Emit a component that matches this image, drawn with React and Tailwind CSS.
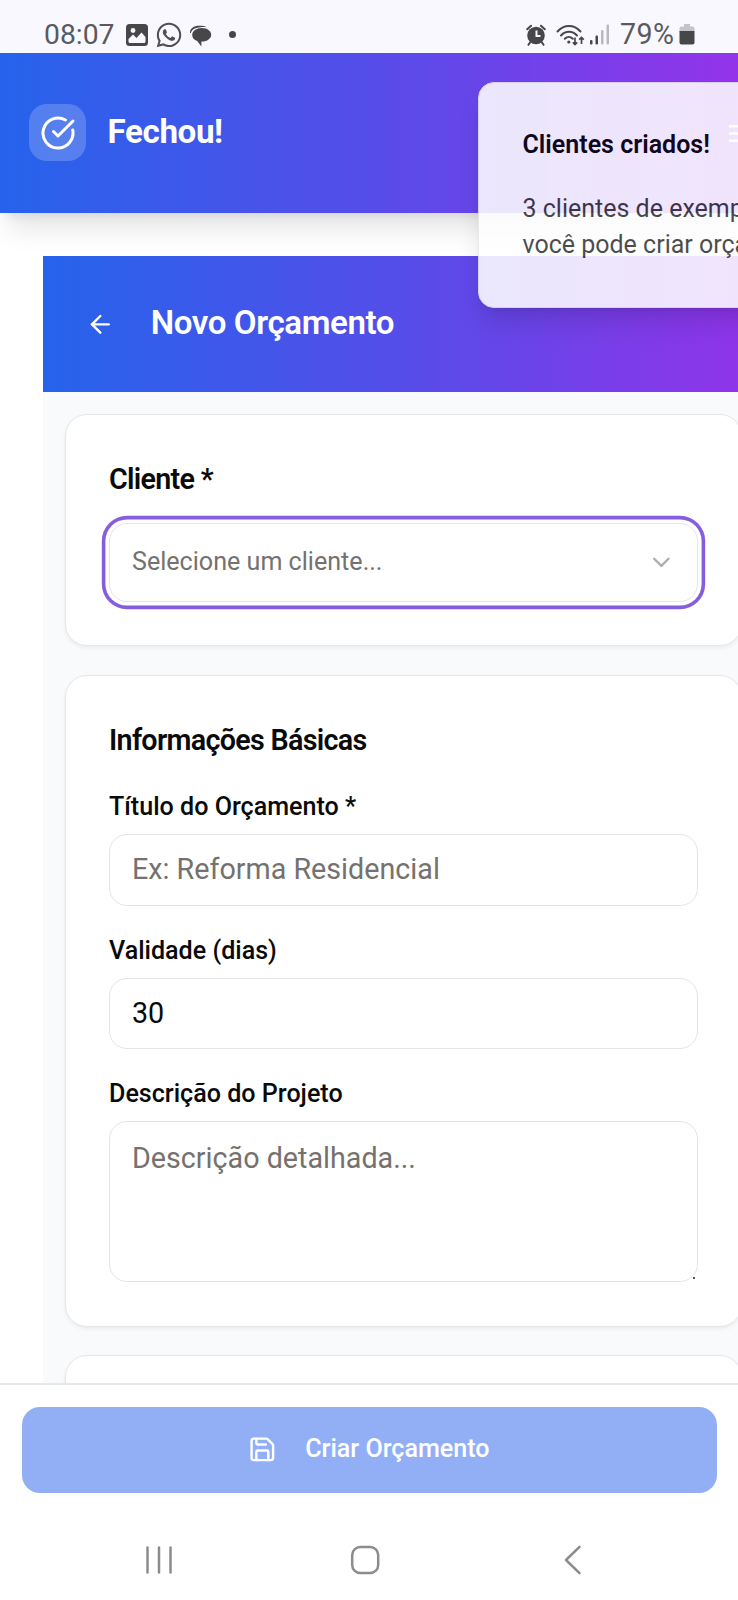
import { ArrowLeft, ChevronDown, CircleCheckBig, Save } from "lucide-react";
import { FaWhatsapp } from "react-icons/fa";

function StatusBar() {
  return (
    <div className="flex h-[53px] shrink-0 items-start justify-between bg-[#f9f8ff] pl-[44px] pr-[43px] pt-[19px] text-[#505054]">
      <div className="flex h-[31px] items-center">
        <span className="w-[82px] text-[28.3px] leading-[31px] text-[#5a5a5e]">08:07</span>
        <svg width="22" height="22" viewBox="0 0 22 22" className="shrink-0">
          <rect width="22" height="22" rx="3.5" fill="#47474a" />
          <path d="M2.5 17.5v-2.500l4.500-4.500 3.500 3.500 5-5.500 4 4.500v4.500a1.5 1.5 0 0 1-1.5 1.5H4a1.5 1.5 0 0 1-1.5-1.5Z" fill="#f9f8ff" />
          <circle cx="7" cy="6.5" r="2.4" fill="#f9f8ff" />
        </svg>
        <FaWhatsapp className="ml-[7px] h-[28px] w-[28px] shrink-0" />
        <svg width="24" height="22" viewBox="0 0 24 22" className="ml-[6px] mt-[2px] shrink-0" fill="#47474a">
          <path d="M1 8C.6 3.500 5 .8 10 .8c3.500 0 6.600.4 8.500 1.700-2-.4-4.500-.5-6.500-.3C6.500 2.300 3 4.300 1.800 8Z" />
          <path d="M12.800 3c5.300 0 9.400 2.800 9.400 6.800 0 3.900-4 6.800-9.200 6.800h-.6V21.500L8.200 16C5 15 3.200 12.600 3.200 9.900 3.200 6 7.400 3 12.800 3Z" />
        </svg>
        <span className="ml-[16px] h-[7px] w-[7px] rounded-full bg-[#47474a]" />
      </div>
      <div className="flex h-[31px] items-center">
        <svg width="20" height="22" viewBox="0 0 20 22" className="shrink-0" fill="none">
          <circle cx="10" cy="11.500" r="8.800" fill="#47474a" />
          <path d="M1.200 5.200 5 1.700M18.800 5.200 15 1.700M4 18.500 2.500 20.800M16 18.500l1.500 2.300" stroke="#47474a" strokeWidth="2" strokeLinecap="round" />
          <path d="M10.500 6.500v5.500h4" stroke="#f9f8ff" strokeWidth="2" />
        </svg>
        <svg width="29" height="22" viewBox="0 0 29 22" className="ml-[10px] shrink-0" fill="none" stroke="#47474a">
          <path d="M1.500 7.500C8 .2 18 .2 24.500 7.500M5 11.500c4.500-5 11.500-5 16 0M8.800 14.800c2.500-2.500 5.500-2.500 8 0" strokeWidth="2" strokeLinecap="round" />
          <circle cx="12.800" cy="18" r="1.600" fill="#47474a" stroke="none" />
          <path d="M19 13.500v7M16.800 18.300l2.200 2.200 2.200-2.200M25.500 20v-6.500M23.200 15.700l2.300-2.200 2.300 2.200" strokeWidth="1.700" />
        </svg>
        <svg width="20" height="21" viewBox="0 0 20 21" className="ml-[5px] shrink-0">
          <rect x="0" y="16" width="2.500" height="4.500" rx="1" fill="#47474a" />
          <rect x="5.500" y="11.500" width="2.500" height="9" rx="1" fill="#47474a" />
          <rect x="11" y="6" width="2.500" height="14.500" rx="1" fill="#b9b8bd" />
          <rect x="16.500" y="0.500" width="2.500" height="20" rx="1" fill="#b9b8bd" />
        </svg>
        <span className="ml-[10px] w-[60px] whitespace-nowrap text-[28.6px] leading-[31px] tracking-[0.4px] text-[#5a5a5e]">79%</span>
        <svg width="16" height="21" viewBox="0 0 16 21" className="ml-[-1px] shrink-0">
          <path d="M5 0h6v2.500h2.500A2 2 0 0 1 15.500 4.500V8H.5V4.500A2 2 0 0 1 2.500 2.500H5Z" fill="#c4c3c9" />
          <path d="M.5 7h15v11.500a2 2 0 0 1-2 2h-11a2 2 0 0 1-2-2Z" fill="#47474a" />
        </svg>
      </div>
    </div>
  );
}

function AppHeader() {
  return (
    <header className="relative z-10 flex h-[160px] shrink-0 items-center bg-linear-to-r/srgb from-[#2563eb] via-[#564de9] to-[#9333ea] pl-[29px] shadow-[0_24px_24px_-8px_rgba(0,0,0,0.10),0_8px_11px_-7px_rgba(0,0,0,0.10)]">
      <div className="mt-[-1px] flex h-[57px] w-[57px] shrink-0 items-center justify-center rounded-[18px] bg-white/20">
        <CircleCheckBig size={36} strokeWidth={2} className="text-white" />
      </div>
      <h1 className="ml-[21.5px] mt-[-3px] text-[33.2px] font-bold leading-[40px] tracking-[-0.4px] text-white">Fechou!</h1>
      <svg width="29" height="29" viewBox="0 0 24 24" className="ml-auto -mr-[15px] shrink-0" fill="none" stroke="white" strokeWidth="2">
        <path d="M4 6h16M4 12h16M4 18h16" />
      </svg>
    </header>
  );
}

function Toast() {
  return (
    <div className="absolute left-[478px] top-[82px] z-20 h-[226px] w-[420px] rounded-[16px] border border-[#e5e7eb] bg-white pl-[43.5px] pt-[44px] text-black opacity-[0.87] shadow-[0_18px_27px_-5px_rgba(0,0,0,0.14),0_7px_11px_-7px_rgba(0,0,0,0.14)]">
      <p className="text-[25px] font-semibold leading-[36px]">Clientes criados!</p>
      <p className="mt-[28px] whitespace-nowrap text-[25px] leading-[36px] opacity-80">
        3 clientes de exemplo
        <br />
        você pode criar orçamentos
      </p>
    </div>
  );
}

function Card({ className, children }) {
  return (
    <section className={`shrink-0 rounded-[22px] border border-[#e5e7eb] bg-white px-[43px] shadow-[0_2px_4px_rgba(0,0,0,0.06)] ${className}`}>
      {children}
    </section>
  );
}

function Field({ label, className, children }) {
  return (
    <div className={className}>
      <label className="block text-[25.1px] font-medium leading-[25px] text-[#0a0a0a]">{label}</label>
      {children}
    </div>
  );
}

export default function App() {
  return (
    <div className="relative flex h-[1600px] w-[738px] flex-col overflow-hidden bg-white font-['Roboto',sans-serif]">
      <StatusBar />
      <AppHeader />
      <Toast />

      <main className="ml-[43px] mt-[43px] flex h-[1127px] w-[721px] shrink-0 flex-col overflow-hidden bg-[#f8fafc]">
        <div className="flex h-[136px] shrink-0 items-center bg-linear-to-r/srgb from-[#2563eb] via-[#564de9] to-[#9333ea] pl-[43px] text-white">
          <ArrowLeft size={28.7} className="shrink-0" />
          <h2 className="ml-[36px] mt-[-2px] text-[33.1px] font-semibold leading-[40px] tracking-[-0.4px]">Novo Orçamento</h2>
        </div>

        <div className="flex flex-col px-[22px] pt-[22px]">
          <Card className="h-[232px] pt-[50px]">
            <h3 className="text-[28.7px] font-semibold leading-[29px] tracking-[-0.7px] text-[#0a0a0a]">Cliente *</h3>
            <button className="mt-[29px] flex h-[79px] w-[589px] items-center justify-between rounded-[18px] border border-[#e5e5e5] bg-white pl-[22px] pr-[21px] text-[25.1px] text-[#75716e] shadow-[0_0_0_3.6px_#fff,0_0_0_7.2px_#855ddf]">
              <span className="mt-[-1px] leading-[36px]">Selecione um cliente...</span>
              <ChevronDown size={28.7} className="text-[#b0aeac]" />
            </button>
          </Card>

          <Card className="mt-[29px] h-[652px] pt-[50px]">
            <h3 className="text-[28.7px] font-semibold leading-[29px] tracking-[-0.7px] text-[#0a0a0a]">Informações Básicas</h3>
            <Field label="Título do Orçamento *" className="mt-[39px]">
              <input
                placeholder="Ex: Reforma Residencial"
                className="mt-[15px] block h-[72px] w-[589px] rounded-[18px] border border-[#e5e5e5] bg-white px-[22px] pb-[2px] text-[28.7px] outline-none placeholder:text-[#75716e]"
              />
            </Field>
            <Field label="Validade (dias)" className="mt-[32px]">
              <input
                defaultValue="30"
                className="mt-[15px] block h-[71px] w-[589px] rounded-[18px] border border-[#e5e5e5] bg-white px-[22px] pb-[2px] text-[28.7px] text-[#0a0a0a] outline-none"
              />
            </Field>
            <Field label="Descrição do Projeto" className="mt-[32px]">
              <div className="relative mt-[15px] w-[589px]">
                <textarea
                  placeholder="Descrição detalhada..."
                  className="block h-[161px] w-full resize-none rounded-[18px] border border-[#e5e5e5] bg-white px-[22px] pt-[15px] text-[28.7px] leading-[43px] outline-none placeholder:text-[#75716e]"
                />
                <span className="absolute bottom-[3px] right-[3px] h-[2px] w-[2px] bg-[#555]" />
              </div>
            </Field>
          </Card>

          <Card className="mt-[28px] h-[200px]" />
        </div>
      </main>

      <footer className="flex h-[125px] shrink-0 items-start border-t-2 border-[#e8e8ea] bg-white pl-[22px] pr-[21px] pt-[22px]">
        <button className="flex h-[86px] w-full items-center justify-center rounded-[18px] bg-[#92aff5] pb-[2px] pr-[1px] text-white">
          <Save size={28.7} />
          <span className="ml-[28px] text-[25.1px] font-medium leading-[36px]">Criar Orçamento</span>
        </button>
      </footer>

      <nav className="flex h-[92px] items-start bg-white pl-[144px] pt-[36px] text-[#8c8c8c]">
        <svg width="30" height="32" viewBox="0 0 30 32" fill="none" stroke="currentColor" strokeWidth="2.500" strokeLinecap="round">
          <path d="M3.500 3.500v25M15 3.500v25M26.500 3.500v25" />
        </svg>
        <svg width="32" height="32" viewBox="0 0 32 32" className="ml-[175px]" fill="none" stroke="currentColor" strokeWidth="2.500">
          <rect x="3.200" y="3" width="26" height="26" rx="8" />
        </svg>
        <svg width="22" height="32" viewBox="0 0 22 32" className="ml-[181px]" fill="none" stroke="currentColor" strokeWidth="2.500" strokeLinecap="round" strokeLinejoin="round">
          <path d="M17.500 2.800 4 16l13.500 13.200" />
        </svg>
      </nav>
    </div>
  );
}
